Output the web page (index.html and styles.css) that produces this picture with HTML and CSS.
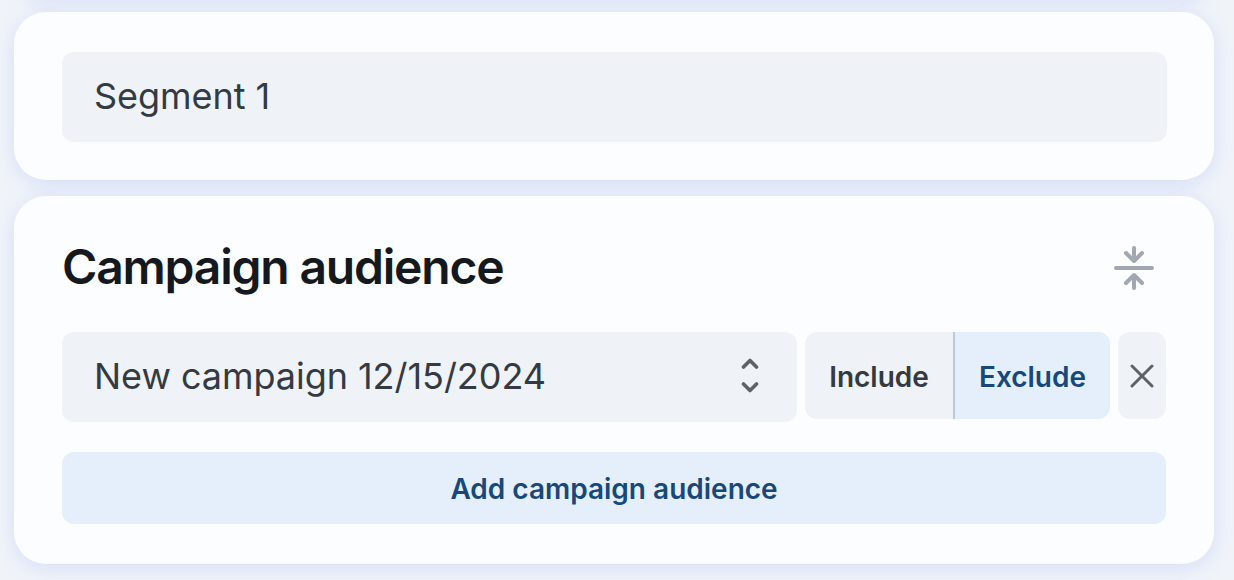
FILE: index.html
```html
<!DOCTYPE html>
<html lang="en">
	<head>
		<meta charset="UTF-8">
		<title>Campaign audience</title>
		<link rel="stylesheet" href="styles.css">
	</head>
	<body>
		<div class="card above"></div>
		<div class="card segment">
			<input type="text" id="segment" class="field" value="Segment 1" aria-label="Segment name">
		</div>
		<div class="card audience">
			<div class="head">
				<h2>Campaign audience</h2>
				<svg class="collapse" width="40" height="46" viewBox="0 0 40 46">
					<path d="M2 23H38M20 3V15M12 8L20 16L28 8M20 43V31M12 38L20 30L28 38"/>
				</svg>
			</div>
			<div class="row">
				<div class="field select">
					<span>New campaign 12/15/2024</span>
					<svg class="arrows" width="20" height="36" viewBox="0 0 20 36">
						<path d="M3.5 9L10 2.5L16.5 9M3.5 26L10 32.5L16.5 26"/>
					</svg>
				</div>
				<div class="toggle">
					<button type="button">Include</button>
					<button type="button" class="active">Exclude</button>
				</div>
				<button type="button" class="remove" aria-label="Remove">
					<svg width="24" height="24" viewBox="0 0 24 24">
						<path d="M2 2L22 22M22 2L2 22"/>
					</svg>
				</button>
			</div>
			<button type="button" class="add">Add campaign audience</button>
		</div>
	</body>
</html>
```
FILE: styles.css
```css
*{
	box-sizing: border-box;
}
body{
	display: flex;
	flex-direction: column;
	gap: 16px;
	margin: 0;
	height: 580px;
	overflow: hidden;
	padding: 0 20px 16px 14px;
	background-color: #f0f4f9;
	font-family: Inter, "Liberation Sans", sans-serif;
}
button{
	border: none;
	margin: 0;
	padding: 2px 0 0;
	font: 600 28px/36px Inter, "Liberation Sans", sans-serif;
}
svg{
	display: block;
	fill: none;
	flex: none;
	stroke-linecap: round;
	stroke-linejoin: round;
}
.card{
	flex: none;
	background-color: #fbfdff;
	border-radius: 32px;
	box-shadow: 0 4px 20px rgba(120, 140, 240, 0.22);
}
/* previous card, scrolled out of view */
.above{
	height: 100px;
	margin-top: -104px;
}
.segment{
	height: 168px;
	padding: 40px 47px 0 48px;
}
.audience{
	height: 368px;
	padding: 40px 48px 0 48px;
}
.field{
	display: block;
	width: 100%;
	height: 90px;
	padding: 0 32px 2px;
	border: none;
	border-radius: 12px;
	background-color: #eff3f8;
	color: #343a42;
	font: 400 36px/44px Inter, "Liberation Sans", sans-serif;
	letter-spacing: -0.04px;
}
.head{
	display: flex;
	justify-content: space-between;
	align-items: center;
	height: 64px;
	padding-right: 12px;
}
h2{
	margin: 0;
	padding-bottom: 4px;
	font-size: 48px;
	font-weight: 600;
	letter-spacing: -1.2px;
	color: #15191d;
}
.collapse{
	stroke: #a2a8b2;
	stroke-width: 4;
}
.row{
	display: flex;
	gap: 8px;
	margin-top: 32px;
}
.select{
	display: flex;
	justify-content: space-between;
	align-items: center;
	flex: 1;
	padding-right: 37px;
}
.arrows{
	stroke: #5d6268;
	stroke-width: 3.6;
}
.toggle{
	display: flex;
	width: 305px;
	height: 87px;
	border-radius: 12px;
	overflow: hidden;
}
.toggle button{
	width: 148px;
	background-color: #eff3f8;
	color: #343a42;
}
.toggle .active{
	width: 157px;
	border-left: 2px solid #bccad8;
	background-color: #e5effb;
	color: #174879;
}
.remove{
	display: flex;
	justify-content: center;
	align-items: center;
	width: 48px;
	height: 87px;
	padding: 0;
	border-radius: 12px;
	background-color: #eff3f8;
	stroke: #5d6268;
	stroke-width: 3;
}
.add{
	display: block;
	width: 100%;
	height: 72px;
	margin-top: 30px;
	border-radius: 12px;
	background-color: #e5effb;
	color: #174879;
}
```
